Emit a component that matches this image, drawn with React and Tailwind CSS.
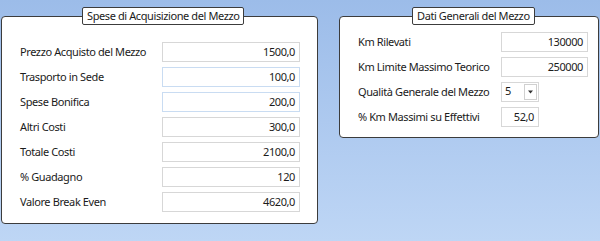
const SPESE = [
  { label: 'Prezzo Acquisto del Mezzo', value: '1500,0' },
  { label: 'Trasporto in Sede', value: '100,0', focus: true },
  { label: 'Spese Bonifica', value: '200,0', focus: true },
  { label: 'Altri Costi', value: '300,0' },
  { label: 'Totale Costi', value: '2100,0' },
  { label: '% Guadagno', value: '120' },
  { label: 'Valore Break Even', value: '4620,0' },
];

function Field({ value, focus, className }) {
  return (
    <div
      className={
        'flex h-[20px] shrink-0 items-center justify-end border bg-white pr-[4px] ' +
        (focus ? 'border-[#c9dcf2] ' : 'border-[#d7d7d7] ') +
        className
      }
    >
      {value}
    </div>
  );
}

function Panel({ title, titleLeft, className, children }) {
  return (
    <div className={'relative shrink-0 rounded-[4px] border border-[#3c3c3c] bg-white ' + className}>
      <div
        className="absolute top-[-10px] flex h-[18px] items-center whitespace-nowrap rounded-[2px] border border-[#3c3c3c] bg-white px-[4px]"
        style={{ left: titleLeft }}
      >
        {title}
      </div>
      {children}
    </div>
  );
}

export default function App() {
  return (
    <div
      className="flex h-[241px] w-[600px] items-start gap-[21px] bg-gradient-to-b from-[#9cbce9] to-[#bed6f5] pl-[1px] pt-[16px] text-[11px] tracking-[-0.4px] whitespace-nowrap text-[#1b1b1b]"
      style={{ fontFamily: '"Noto Sans", sans-serif' }}
    >
      <Panel title="Spese di Acquisizione del Mezzo" titleLeft={80} className="w-[317px] pt-[25px] pb-[11px] pl-[18px]">
        <div className="flex flex-col gap-[5px]">
          {SPESE.map((r) => (
            <div key={r.label} className="flex items-center">
              <span className="w-[142px]">{r.label}</span>
              <Field value={r.value} focus={r.focus} className="w-[138px]" />
            </div>
          ))}
        </div>
      </Panel>

      <Panel title="Dati Generali del Mezzo" titleLeft={72} className="w-[260px] pt-[15px] pb-[10px] pl-[18px]">
        <div className="flex flex-col gap-[5px]">
          <div className="flex items-center">
            <span className="w-[143px]">Km Rilevati</span>
            <Field value="130000" className="w-[87px]" />
          </div>
          <div className="flex items-center">
            <span className="w-[143px]">Km Limite Massimo Teorico</span>
            <Field value="250000" className="w-[87px]" />
          </div>
          <div className="flex items-center">
            <span className="w-[143px]">Qualità Generale del Mezzo</span>
            <div className="flex h-[20px] w-[38px] items-stretch border border-[#d7d7d7] bg-white">
              <span className="flex-1 pl-[3px] leading-[16px]">5</span>
              <div className="m-[1px] flex w-[13px] items-center justify-center border border-[#d0d0d0] bg-white">
                <svg width="7" height="4" viewBox="0 0 7 4">
                  <path d="M1 0.5h5L3.5 3.5z" fill="#333" />
                </svg>
              </div>
            </div>
          </div>
          <div className="flex items-center">
            <span className="w-[143px]">% Km Massimi su Effettivi</span>
            <Field value="52,0" className="w-[38px]" />
          </div>
        </div>
      </Panel>
    </div>
  );
}
